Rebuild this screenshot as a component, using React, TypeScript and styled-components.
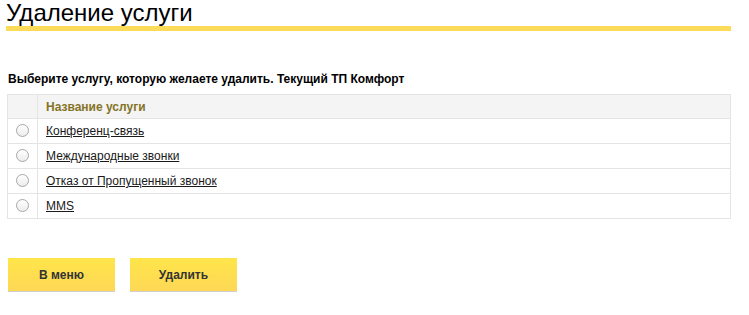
import React from "react";
import styled, { createGlobalStyle } from "styled-components";

const GlobalStyle = createGlobalStyle`
  body {
    margin: 0;
    background: #fff;
    font-family: "Liberation Sans", Arial, sans-serif;
    color: #000;
  }
`;

const Page = styled.div`
  width: 725px;
  padding-left: 6px;
`;

const Title = styled.h1`
  margin: 0;
  font-size: 24px;
  line-height: 26px;
  font-weight: normal;
  border-bottom: 5px solid #fcdb59;
`;

const Prompt = styled.p`
  margin: 41px 0 7px 2px;
  font-size: 12px;
  line-height: 15px;
  font-weight: bold;
`;

const Table = styled.table`
  margin-left: 1px;
  width: 724px;
  border-collapse: collapse;
  font-size: 12px;
`;

const HeadCell = styled.th<{ $narrow?: boolean }>`
  height: 23px;
  padding: 0 ${(p) => (p.$narrow ? "0" : "8px")};
  width: ${(p) => (p.$narrow ? "29px" : "auto")};
  background: #f4f4f4;
  border: 1px solid #e4e4e4;
  text-align: left;
  color: #847326;
  font-weight: bold;
`;

const Cell = styled.td<{ $narrow?: boolean }>`
  height: 24px;
  padding: 0 ${(p) => (p.$narrow ? "0" : "8px")};
  width: ${(p) => (p.$narrow ? "29px" : "auto")};
  border: 1px solid #e4e4e4;
  text-align: ${(p) => (p.$narrow ? "center" : "left")};
  vertical-align: middle;
`;

const Radio = styled.span`
  display: inline-block;
  box-sizing: border-box;
  width: 13px;
  height: 13px;
  border: 1px solid #a8a8a8;
  border-radius: 50%;
  background: linear-gradient(#fff, #ececec);
  vertical-align: middle;
  margin-top: -2px;
`;

const ServiceLink = styled.a`
  color: #1a1a1a;
  text-decoration: underline;
`;

const Actions = styled.div`
  margin: 39px 0 0 2px;
  display: flex;
  gap: 15px;
`;

const Button = styled.button`
  width: 107px;
  height: 34px;
  border: 0;
  border-bottom: 1px solid #cfcfcf;
  background: linear-gradient(#ffe54a, #fdd856);
  font-family: "Liberation Sans", Arial, sans-serif;
  font-size: 12px;
  font-weight: bold;
  color: #333;
  cursor: pointer;
`;

const services = [
  "Конференц-связь",
  "Международные звонки",
  "Отказ от Пропущенный звонок",
  "MMS",
];

export default function App() {
  return (
    <Page>
      <GlobalStyle />
      <Title>Удаление услуги</Title>
      <Prompt>Выберите услугу, которую желаете удалить. Текущий ТП Комфорт</Prompt>
      <Table>
        <thead>
          <tr>
            <HeadCell $narrow />
            <HeadCell>Название услуги</HeadCell>
          </tr>
        </thead>
        <tbody>
          {services.map((s) => (
            <tr key={s}>
              <Cell $narrow>
                <Radio />
              </Cell>
              <Cell>
                <ServiceLink href="#">{s}</ServiceLink>
              </Cell>
            </tr>
          ))}
        </tbody>
      </Table>
      <Actions>
        <Button>В меню</Button>
        <Button>Удалить</Button>
      </Actions>
    </Page>
  );
}
